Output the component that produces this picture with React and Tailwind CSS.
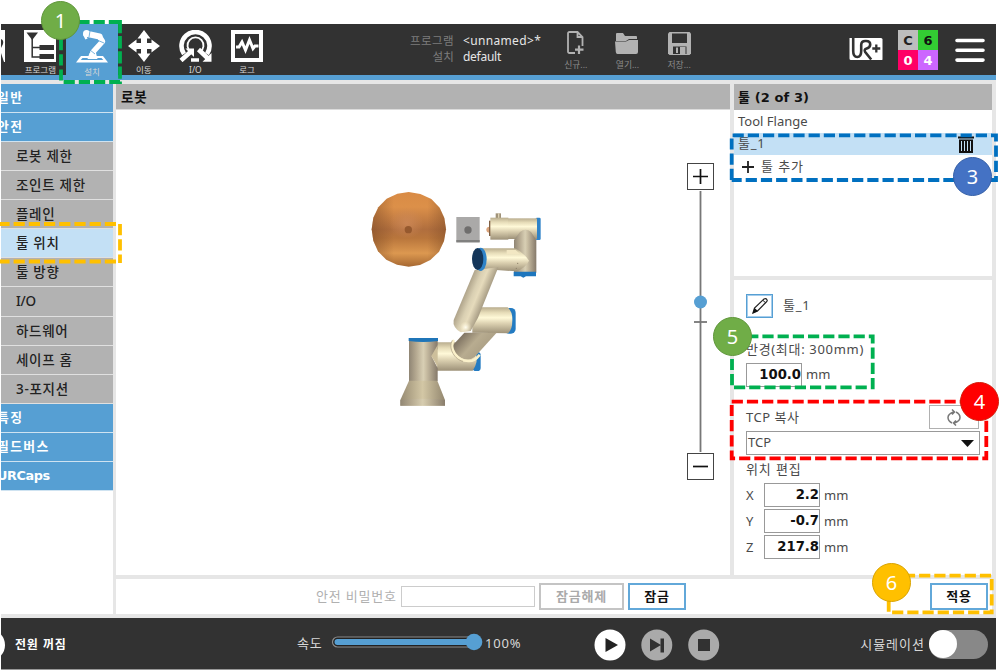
import React from "react";

const SANS = "font-['Noto_Sans','Noto_Sans_CJK_KR',sans-serif]";
const BOLD = "font-['DejaVu_Sans','Noto_Sans_CJK_KR',sans-serif] font-bold";

/* ---------- header ---------- */

function ProgramIcon() {
  return (
    <svg width="32" height="32" viewBox="0 0 32 32">
      <rect width="32" height="32" fill="#fff" />
      <path d="M2.500 2.500h11.500L8.200 10z" fill="#323232" />
      <path d="M8.200 8v19H16M8.200 17.500H16" fill="none" stroke="#323232" strokeWidth="1.500" />
      <path d="M15.500 15H30v5H15.500zM15.500 24H30v5H15.500z" fill="#323232" />
    </svg>
  );
}

function RobotArmIcon() {
  return (
    <svg width="32" height="33" viewBox="0 0 32 33">
      <path d="M5 26h22l5 6.500H0z" fill="#fff" />
      <path d="M6.500 28h19l1.800 2H4.700z" fill="#569fd3" />
      <path d="M11.500 29l2-6 6-2 2 8z" fill="#fff" />
      <path d="M12 4l11.500 2.500" stroke="#fff" strokeWidth="6" strokeLinecap="round" />
      <path d="M24 7.500l2.500 4L17 22" fill="none" stroke="#fff" strokeWidth="5.500" strokeLinejoin="round" strokeLinecap="round" />
      <circle cx="10.500" cy="3.500" r="3.500" fill="#fff" />
      <path d="M8 4l2.500 5" stroke="#fff" strokeWidth="2.500" />
      <path d="M14 1l-1 6M20 9.500l8 3.500M14 20l5 4" stroke="#569fd3" strokeWidth="0.800" />
    </svg>
  );
}

function MoveIcon() {
  return (
    <svg width="32" height="32" viewBox="0 0 32 32" fill="#fff">
      <path d="M16 0l6.500 8.500h-13zM32 16l-8.500 6.500v-13zM16 32l-6.500-8.500h13zM0 16l8.500-6.500v13z" />
      <path d="M13 7h6v6h6v6h-6v6h-6v-6H7v-6h6z" />
    </svg>
  );
}

function IoIcon() {
  return (
    <svg width="33" height="32" viewBox="0 0 33 32">
      <path d="M5 24A14 14 0 1 1 28 24" fill="none" stroke="#fff" strokeWidth="4.600" />
      <path d="M12 22a8 8 0 1 1 9 0" fill="none" stroke="#fff" strokeWidth="1.800" />
      <path d="M12 30h8" stroke="#fff" strokeWidth="3.500" />
      <path d="M2 30.500l10-9M19.500 19.500l9.500 9" stroke="#fff" strokeWidth="4.500" />
      <path d="M6.500 18.500H15V27zM23.500 31.800H32.500V23z" fill="#fff" />
    </svg>
  );
}

function LogIcon() {
  return (
    <svg width="32" height="32" viewBox="0 0 32 32">
      <rect width="32" height="32" fill="#fff" />
      <rect x="4" y="4" width="24" height="24" fill="#323232" />
      <path d="M5 17h3l3-5 3.500 8 4-10 3.500 8.500 2-2.500h3.500" fill="none" stroke="#fff" strokeWidth="3" />
    </svg>
  );
}

function Tab({ icon, label, active }) {
  return (
    <div className={`flex w-[51.700px] shrink-0 flex-col items-center pt-[6px] ${active ? "h-14 bg-[#569fd3]" : "h-[51px]"}`}>
      <div className="flex h-[34px] items-start">{icon}</div>
      <span className="mt-[3px] whitespace-nowrap text-[8.500px] leading-[10px] text-[#d8d8d8]">{label}</span>
    </div>
  );
}

function FileAction({ icon, label }) {
  return (
    <div className="flex w-[51.700px] flex-col items-center pt-[7px]">
      <div className="flex h-6 items-center">{icon}</div>
      <span className="mt-1 whitespace-nowrap text-[8.800px] leading-3 text-[#8c8c8c]">{label}</span>
    </div>
  );
}

function NewFileIcon() {
  return (
    <svg width="17" height="24" viewBox="0 0 17 24" fill="none" stroke="#b2b2b2" strokeWidth="1.800">
      <path d="M8 22H2.500Q1 22 1 20.500V2.500Q1 1 2.500 1H10.500l5 5v9M10.500 1v5h5" />
      <path d="M12 14.500v8.500M8 18.700h8.500" strokeWidth="2.200" />
    </svg>
  );
}

function FolderIcon() {
  return (
    <svg width="24" height="22" viewBox="0 0 24 22" fill="#b2b2b2">
      <path d="M1 8V2q0-1 1-1h6l2 3h11q1 0 1 1v2h-8l-3 2H1z" />
      <path d="M0 9.500h11L14 8h9v12q0 2-2 2H2.500Q1 22 .8 20z" />
    </svg>
  );
}

function SaveIcon() {
  return (
    <svg width="23" height="23" viewBox="0 0 23 23">
      <path d="M1.500 0h20L23 1.500V21.500L21.500 23H1.500L0 21.500V1.500z" fill="#b2b2b2" />
      <path d="M4 1.500h15V11H4zM5 14.500h13.500V22H5z" fill="#323232" />
      <path d="M8 15.500h2V21H8zM12 15h5.500v7H12z" fill="#b2b2b2" />
    </svg>
  );
}

function UrPlusIcon() {
  return (
    <svg width="34" height="24" viewBox="0 0 34 24">
      <path d="M2.500 1H32q1.500 0 1.500 1.500v20Q33.500 23 32 23H2Q.5 23 .5 21.500V1z" fill="#fff" />
      <path d="M4.200 0v14q0 6 4 6t4-6V8q0-4 4-4h1q4 0 4 3.500 0 3-3.500 4-3 .8-1.500 3.500l6 7.500" fill="none" stroke="#323232" strokeWidth="2.600" />
      <path d="M27.300 7.500v8M23.300 11.500h8" stroke="#323232" strokeWidth="2.300" />
    </svg>
  );
}

function Header() {
  return (
    <header className="flex h-14 border-b-[5px] border-[#569fd3] bg-[#323232]">
      <div className="w-[13.500px] shrink-0 pt-[6px]">
        <svg width="4" height="32" viewBox="0 0 4 32">
          <path d="M0 0h4v32H0z" fill="#fff" />
          <path d="M0 9q3 1 2 5l-2 4zM0 23l3 9H0z" fill="#323232" />
        </svg>
      </div>
      <Tab icon={<ProgramIcon />} label="프로그램" />
      <Tab icon={<RobotArmIcon />} label="설치" active />
      <Tab icon={<MoveIcon />} label="이동" />
      <Tab icon={<IoIcon />} label="I/O" />
      <Tab icon={<LogIcon />} label="로그" />
      <div className="ml-[132px] mt-[9px] grid h-8 w-[145px] grid-cols-[49px_1fr] gap-x-[9px] text-[12px] leading-4">
        <span className="whitespace-nowrap text-right text-[11.500px] tracking-[0.400px] text-[#7d7d7d]">프로그램</span>
        <span className="tracking-[0.350px] text-[#e6e6e6]">&lt;unnamed&gt;*</span>
        <span className="text-right text-[11.500px] tracking-[0.200px] text-[#7d7d7d]">설치</span>
        <span className="tracking-[-0.250px] text-[#e6e6e6]">default</span>
      </div>
      <FileAction icon={<NewFileIcon />} label="신규..." />
      <FileAction icon={<FolderIcon />} label="열기..." />
      <FileAction icon={<SaveIcon />} label="저장..." />
      <div className="ml-auto mt-[13px]"><UrPlusIcon /></div>
      <div className={`ml-[15px] mt-[6px] grid h-10 w-10 grid-cols-2 grid-rows-[20px_20px] text-center text-[13px] leading-[21px] ${BOLD}`}>
        <span className="bg-[#bdbdbd] text-[#222]">C</span>
        <span className="bg-[#33cc33] text-[#111]">6</span>
        <span className="bg-[#ff0066] text-white">0</span>
        <span className="bg-[#cc66ff] text-white">4</span>
      </div>
      <svg className="ml-[17px] mr-[11px] mt-[14px]" width="30" height="25" viewBox="0 0 30 25">
        <path d="M2 2.500h26M2 12.300h26M2 22.100h26" stroke="#fff" strokeWidth="3.600" strokeLinecap="round" />
      </svg>
    </header>
  );
}

/* ---------- sidebar ---------- */

function Group({ children, tracking = "tracking-[1.400px]" }) {
  return (
    <div className={`flex h-[29.070px] items-center border-b border-[#cfe3f1] bg-[#569fd3] ${BOLD}`}>
      <span className={`-ml-1 whitespace-nowrap text-[12.800px] leading-4 text-white ${tracking}`}>{children}</span>
    </div>
  );
}

function Item({ children, active, tracking = "tracking-[0.700px]" }) {
  return (
    <div className={`flex h-[29.070px] items-center border-b border-[#e0e0e0] pl-[15px] font-medium ${active ? "bg-[#c3e0f5]" : "bg-[#b2b2b2]"}`}>
      <span className={`whitespace-nowrap text-[13.500px] leading-4 text-[#222] ${tracking}`}>{children}</span>
    </div>
  );
}

function Sidebar() {
  return (
    <nav className="w-[112px] shrink-0 overflow-hidden bg-white">
      <Group>일반</Group>
      <Group>안전</Group>
      <Item>로봇 제한</Item>
      <Item>조인트 제한</Item>
      <Item>플레인</Item>
      <Item active>툴 위치</Item>
      <Item>툴 방향</Item>
      <Item tracking="tracking-[-0.300px]">I/O</Item>
      <Item>하드웨어</Item>
      <Item>세이프 홈</Item>
      <Item>3-포지션</Item>
      <Group>특징</Group>
      <Group>필드버스</Group>
      <Group tracking="tracking-[-0.400px]">URCaps</Group>
    </nav>
  );
}

/* ---------- robot view ---------- */

const SPHERE = "M176 66l35 6 33 15 25 26 14 31 5 34-6 35-15 32-26 25-31 15-34 5-35-6-32-15-25-25-14-32-5-34 5-35 15-31 25-26 32-15z";

function Robot() {
  return (
    <svg className="shrink-0" width="220" height="250" viewBox="0 0 660 750">
      <defs>
        <linearGradient id="tubeH">
          <stop offset="0" stopColor="#8f8574" />
          <stop offset=".25" stopColor="#b5a991" />
          <stop offset=".5" stopColor="#d8cfb4" />
          <stop offset=".6" stopColor="#cabfa4" />
          <stop offset="1" stopColor="#85796a" />
        </linearGradient>
        <linearGradient id="tubeV" x1="0" y1="0" x2="0" y2="1">
          <stop offset="0" stopColor="#b9ad8e" />
          <stop offset=".2" stopColor="#e6dcb8" />
          <stop offset=".4" stopColor="#fff9d8" />
          <stop offset=".62" stopColor="#dcd1b1" />
          <stop offset="1" stopColor="#9d9178" />
        </linearGradient>
        <linearGradient id="cone">
          <stop offset="0" stopColor="#978b72" />
          <stop offset=".5" stopColor="#d3c7a5" />
          <stop offset="1" stopColor="#93876f" />
        </linearGradient>
        <linearGradient id="upper" gradientUnits="userSpaceOnUse" x1="335" y1="365" x2="415" y2="398">
          <stop offset="0" stopColor="#9b8f78" />
          <stop offset=".38" stopColor="#d9cfb2" />
          <stop offset=".55" stopColor="#e6dbbc" />
          <stop offset="1" stopColor="#8d826d" />
        </linearGradient>
        <linearGradient id="lower" gradientUnits="userSpaceOnUse" x1="325" y1="495" x2="400" y2="562">
          <stop offset="0" stopColor="#75695a" />
          <stop offset=".5" stopColor="#b8ac90" />
          <stop offset="1" stopColor="#a79b81" />
        </linearGradient>
        <linearGradient id="ball" x1="0" y1="0" x2="0" y2="1">
          <stop offset="0" stopColor="#d98b45" />
          <stop offset=".2" stopColor="#dc9049" />
          <stop offset=".5" stopColor="#b06e3e" />
          <stop offset=".62" stopColor="#b9763c" />
          <stop offset=".82" stopColor="#dc9850" />
          <stop offset="1" stopColor="#a66832" />
        </linearGradient>
        <linearGradient id="ballSides">
          <stop offset="0" stopColor="#7a4824" stopOpacity=".5" />
          <stop offset=".3" stopColor="#7a4824" stopOpacity="0" />
          <stop offset=".75" stopColor="#7a4824" stopOpacity="0" />
          <stop offset="1" stopColor="#7a4824" stopOpacity=".45" />
        </linearGradient>
        <radialGradient id="warm">
          <stop offset="0" stopColor="#cf8a5a" stopOpacity=".75" />
          <stop offset="1" stopColor="#cf8a5a" stopOpacity="0" />
        </radialGradient>
        <radialGradient id="glow">
          <stop offset="0" stopColor="#fffdf0" />
          <stop offset="1" stopColor="#fff3ce" stopOpacity="0" />
        </radialGradient>
      </defs>

      <path d={SPHERE} fill="url(#ball)" />
      <path d={SPHERE} fill="url(#ballSides)" />
      <ellipse cx="170" cy="160" rx="52" ry="46" fill="url(#warm)" />
      <circle cx="175" cy="179" r="11" fill="#96592e" />

      <rect x="319" y="141" width="70" height="76" fill="#aaa9a8" />
      <rect x="319" y="210" width="70" height="7" fill="#80807f" />
      <circle cx="354" cy="180" r="11" fill="#6f6e6d" />

      <path d="M437 130h16v16h-16z" fill="#a09379" />
      <path d="M444 130h4v16h-4z" fill="#ded2b4" />
      <path d="M419 170q-10 0-10 9t10 9z" fill="#dba47c" />
      <rect x="417" y="152" width="8" height="46" fill="#806044" />
      <rect x="557" y="143" width="15" height="67" rx="4" fill="#2f83c8" />
      <rect x="421" y="143" width="54" height="66" fill="url(#tubeV)" />
      <rect x="474" y="145" width="87" height="62" fill="url(#tubeV)" />
      <path d="M492 210l18-24q17-14 33 0l16 24v98h-67z" fill="url(#tubeH)" />
      <path d="M491 305h67v14h-30l-8 4-8-4h-21z" fill="#1e76bd" />

      <path d="M389 235h105q25 10 43 37-10 22-39 32l-100-7z" fill="url(#tubeV)" />
      <path d="M470 240h27l13 12h-40z" fill="#f2e7c3" />
      <circle cx="503" cy="280" r="2" fill="#8c8069" />
      <circle cx="499" cy="295" r="2" fill="#8c8069" />

      <rect x="462" y="414" width="35" height="77" rx="14" fill="#237bc2" />
      <path d="M367 488V418l22-6h84q15 13 14 38 0 30-13 40z" fill="url(#tubeV)" />
      <path d="M374 300l71-8-61 151-22 40-30 4q-25-15-21-37z" fill="url(#upper)" />
      <circle cx="347" cy="472" r="18" fill="url(#glow)" />

      <rect x="368" y="546" width="24" height="57" rx="10" fill="#237bc2" />
      <path d="M260 517h98l20 35q8 25-10 50H260z" fill="url(#tubeV)" />
      <path d="M343 488h97l-66 73q-22 15-45 0-24-16-19-37z" fill="url(#lower)" />
      <path d="M312 510c-18 22 8 64 45 63q18 0 32-19" fill="none" stroke="#fbf1ca" strokeWidth="8" />
      <path d="M307 511c-14 27 9 58 32 63" fill="none" stroke="#a6997d" strokeWidth="2" />
      <path d="M177 511h86v26l-18 22 18 36v38h-86z" fill="url(#tubeH)" />
      <path d="M263 525l-19 33 19 33z" fill="#cdbf9b" />
      <path d="M176 504h88v9q-44 6-88 0z" fill="#1f75b8" />
      <path d="M177 632h85l23 58v17H151v-17z" fill="url(#cone)" />
      <path d="M151 690q67-8 134 0v17H151z" fill="url(#tubeH)" opacity=".7" />

      <ellipse cx="392" cy="268" rx="18" ry="35" fill="#2f83c8" />
      <ellipse cx="383" cy="267" rx="17" ry="33" fill="#14365a" />
    </svg>
  );
}

function ZoomButton({ minus }) {
  return (
    <div className="flex h-[27px] w-[27px] items-center justify-center border border-[#444] bg-white">
      <svg width="15" height="15" viewBox="0 0 15 15" stroke="#111" strokeWidth="1.700">
        <path d={minus ? "M0 7.500h15" : "M0 7.500h15M7.500 0v15"} />
      </svg>
    </div>
  );
}

function RobotView() {
  return (
    <section className="flex w-[614px] shrink-0 flex-col bg-white">
      <h2 className={`flex h-[26px] items-center border-b border-[#dcdcdc] bg-[#b2b2b2] pl-[5px] pt-[2px] text-[13.500px] leading-none tracking-[0.800px] text-[#111] ${BOLD}`}>로봇</h2>
      <div className="flex pl-[234px]">
        <div className="pt-[60px]"><Robot /></div>
        <div className="ml-[117px] mt-[53px] flex flex-col items-center">
          <ZoomButton />
          <svg width="27" height="263" viewBox="0 0 27 263">
            <path d="M13.500 1v261" stroke="#777" strokeWidth="1.800" />
            <path d="M7 132h13" stroke="#777" strokeWidth="1.800" />
            <circle cx="13.500" cy="112" r="6.500" fill="#569fd3" />
          </svg>
          <ZoomButton minus />
        </div>
      </div>
    </section>
  );
}

/* ---------- tool panel ---------- */

function Field({ value }) {
  return (
    <div className={`flex h-6 w-14 items-center justify-end border border-[#999] bg-white text-[13.200px] leading-none text-[#111] ${BOLD}`}>{value}</div>
  );
}

function Axis({ name, value }) {
  return (
    <div className="flex h-[26px] items-start">
      <span className="w-[18px] leading-6">{name}</span>
      <Field value={value} />
      <span className="ml-1 leading-6">mm</span>
    </div>
  );
}

function ToolPanel() {
  return (
    <aside className="flex w-[258px] shrink-0 flex-col text-[13px] text-[#4a4a4a]">
      <div className="h-[192px] bg-white">
        <h2 className={`flex h-[26px] items-center whitespace-pre bg-[#b2b2b2] pl-[4px] pt-px text-[13px] tracking-[0.100px] text-[#111] ${BOLD}`}>툴 (2 of 3)</h2>
        <div className="flex h-[23px] items-center pl-[4px]">Tool Flange</div>
        <div className="flex h-[22px] items-center justify-between bg-[#c3e0f5] pl-[4px] pr-[18px]">
          <span className="tracking-[0.800px]">툴_1</span>
          <svg width="16" height="18" viewBox="0 0 16 18" fill="#111">
            <path d="M0 1.500h5V0h6v1.500h5v2H0zM1 4.500h14V18H1z" />
            <path d="M3.500 6v10M6.500 6v10M9.500 6v10M12.500 6v10" stroke="#c3e0f5" strokeWidth="1" />
          </svg>
        </div>
        <div className="flex h-[23px] items-center pl-[8px]">
          <svg width="12" height="12" viewBox="0 0 12 12"><path d="M6 0v12M0 6h12" stroke="#222" strokeWidth="1.800" /></svg>
          <span className="ml-[7px] text-[13px] tracking-[0.900px]">툴 추가</span>
        </div>
      </div>
      <div className="mt-1 h-[295px] bg-white pl-3">
        <div className="flex items-center pt-[14px]">
          <div className="flex h-6 w-[27px] items-center justify-center border border-[#569fd3] outline outline-1 -outline-offset-2 outline-[#a5cdec]">
            <svg width="16" height="16" viewBox="0 0 16 16">
              <path d="M1 15l1.500-5L12 1q2-1 3 .8.6 1-.5 2L5.500 13z" fill="#fff" stroke="#222" strokeWidth="1.200" />
              <path d="M.5 15.500l2-5.500 3.500 3z" fill="#111" />
              <path d="M11 2.500l3 2.500" stroke="#222" />
            </svg>
          </div>
          <span className="ml-[10px] tracking-[0.800px]">툴_1</span>
        </div>
        <div className="mt-[21px] h-[23px] whitespace-nowrap leading-[20px] tracking-[0.680px]">반경(최대: 300mm)</div>
        <div className="flex items-center pt-px"><Field value="100.0" /><span className="ml-[4px]">mm</span></div>
        <div className="mt-[18px] flex h-[26px] items-start justify-between pr-[13px]">
          <span className="leading-6 tracking-[0.500px]">TCP 복사</span>
          <div className="flex h-6 w-[50px] items-center justify-center border border-[#b0b0b0]">
            <svg width="14" height="17" viewBox="0 0 14 17" fill="none" stroke="#777" strokeWidth="1.500">
              <path d="M5 14Q1 12 1 8.500T6.500 3M9 3q4 2 4 5.500T7.500 14M5 .5L7.500 3 5 5.500M9 11.500L6.500 14 9 16.500" />
            </svg>
          </div>
        </div>
        <div className="flex h-6 w-[234px] items-center justify-between border border-[#999] pl-px pr-[5px]">
          <span>TCP</span>
          <svg width="13" height="7" viewBox="0 0 13 7"><path d="M0 0h13L6.500 7z" fill="#111" /></svg>
        </div>
        <div className="h-7 pt-[3px] leading-[22px] tracking-[0.900px]">위치 편집</div>
        <Axis name="X" value="2.2" />
        <Axis name="Y" value="-0.7" />
        <Axis name="Z" value="217.8" />
      </div>
    </aside>
  );
}

/* ---------- bottom bars ---------- */

const BUTTON = `flex h-[27px] items-center justify-center border-2 pt-px text-[13px] tracking-[0.800px] ${BOLD}`;

function PasswordBar() {
  return (
    <div className="mt-1 flex h-[35px] items-center bg-white pl-[200px] pr-1">
      <span className="w-[80px] whitespace-nowrap pt-px text-[13px] tracking-[0.800px] text-[#b0b0b0]">안전 비밀번호</span>
      <div className="ml-[5px] h-[21px] w-[134px] border border-[#ccc]" />
      <div className={`ml-1 w-[85px] border-[#c4c4c4] text-[#aaa] ${BUTTON}`}>잠금해제</div>
      <div className={`ml-1 w-[58px] border-[#62a8d9] text-[#111] ${BUTTON}`}>잠금</div>
      <div className={`ml-auto w-[58px] border-[#62a8d9] text-[#111] ${BUTTON}`}>적용</div>
    </div>
  );
}

function Footer() {
  return (
    <footer className="flex h-[51px] items-center bg-[#323232] pt-[3px] text-[#d8d8d8]">
      <svg width="4" height="32" viewBox="12 0 4 32"><circle cx="0" cy="16" r="16" fill="#fff" /></svg>
      <span className={`ml-[10px] w-[282px] text-[12px] tracking-[0.600px] text-white ${BOLD}`}>전원 꺼짐</span>
      <span className="-mt-0.5 w-[26px] whitespace-nowrap text-[13px] tracking-[0.800px]">속도</span>
      <svg className="-mt-[7px] ml-[8px]" width="152" height="18" viewBox="0 0 152 18">
        <rect x="1.500" y="4" width="146" height="10" rx="5" fill="#222" stroke="#8a8a8a" strokeWidth="1.200" />
        <rect x="3.500" y="6" width="140" height="6" rx="3" fill="#569fd3" />
        <circle cx="143" cy="9" r="8.300" fill="#569fd3" />
      </svg>
      <span className="-mt-[3px] ml-[2px] w-[109px] text-[13px] tracking-[0.800px]">100%</span>
      <svg width="126" height="32" viewBox="0 0 126 32">
        <circle cx="16" cy="16" r="15.500" fill="#fff" />
        <path d="M11.500 9v14L24 16z" fill="#222" />
        <circle cx="62.800" cy="16" r="15.500" fill="#aaa" />
        <path d="M56 9.500v13l11-6.500zM66.500 9.500h3.500v14h-3.500z" fill="#323232" />
        <circle cx="109.700" cy="16" r="15.500" fill="#aaa" />
        <path d="M104 10h12v12h-12z" fill="#323232" />
      </svg>
      <span className="ml-auto whitespace-nowrap text-[13px] tracking-[1px]">시뮬레이션</span>
      <div className="-mt-0.5 ml-[4px] mr-[8px] flex h-[29px] w-[59px] items-center rounded-full bg-[#888]">
        <div className="h-[28px] w-[28px] rounded-full bg-white" />
      </div>
    </footer>
  );
}

/* ---------- callouts ---------- */

function Callouts() {
  return (
    <svg className="pointer-events-none absolute left-0 top-0" width="1000" height="670" fill="none" strokeWidth="3.800" strokeDasharray="11.200 4">
      <path d="M120 22H61V82H120ZM120 22V84" stroke="#00b050" />
      <path d="M116 224H0M120 224V263M116 261.500H0" stroke="#ffc000" />
      <path d="M731.700 180V135.300H996V180H731.700" stroke="#0070c0" />
      <path d="M732 336.300H872.700V387.300H732V336.300" stroke="#00b050" />
      <path d="M731.700 401.700H986.300V458.300H731.700V401.700" stroke="#ff0000" />
      <path d="M888.700 575.700H991.700V612.300H888.700V575.700" stroke="#ffc000" />
    </svg>
  );
}

function Badge({ n, className }) {
  return (
    <div className={`absolute flex h-[39px] w-[39px] items-center justify-center rounded-full border text-[20px] leading-none text-white ${className}`}>{n}</div>
  );
}

export default function App() {
  return (
    <div className={`relative h-[670px] w-[1000px] overflow-hidden bg-white pl-px pr-1 pt-6 ${SANS}`}>
      <Header />
      <main className="flex h-[538px] border-b-4 border-r-4 border-t-4 border-[#e6e6e6] bg-[#e6e6e6]">
        <Sidebar />
        <div className="ml-[3px] flex flex-col">
          <div className="flex h-[491px] gap-1">
            <RobotView />
            <ToolPanel />
          </div>
          <PasswordBar />
        </div>
      </main>
      <Footer />
      <div className="h-px bg-[#999]" />
      <Callouts />
      <Badge n="1" className="left-[41px] top-px border-[#5f963a] bg-[#70ad47]" />
      <Badge n="3" className="left-[953px] top-[157px] border-[#3560a8] bg-[#4472c4]" />
      <Badge n="5" className="left-[713px] top-[317px] border-[#5f963a] bg-[#70ad47]" />
      <Badge n="4" className="left-[960px] top-[382px] border-[#d31d0a] bg-[#ff0000]" />
      <Badge n="6" className="left-[872px] top-[563px] border-[#d9a300] bg-[#ffc000]" />
    </div>
  );
}
